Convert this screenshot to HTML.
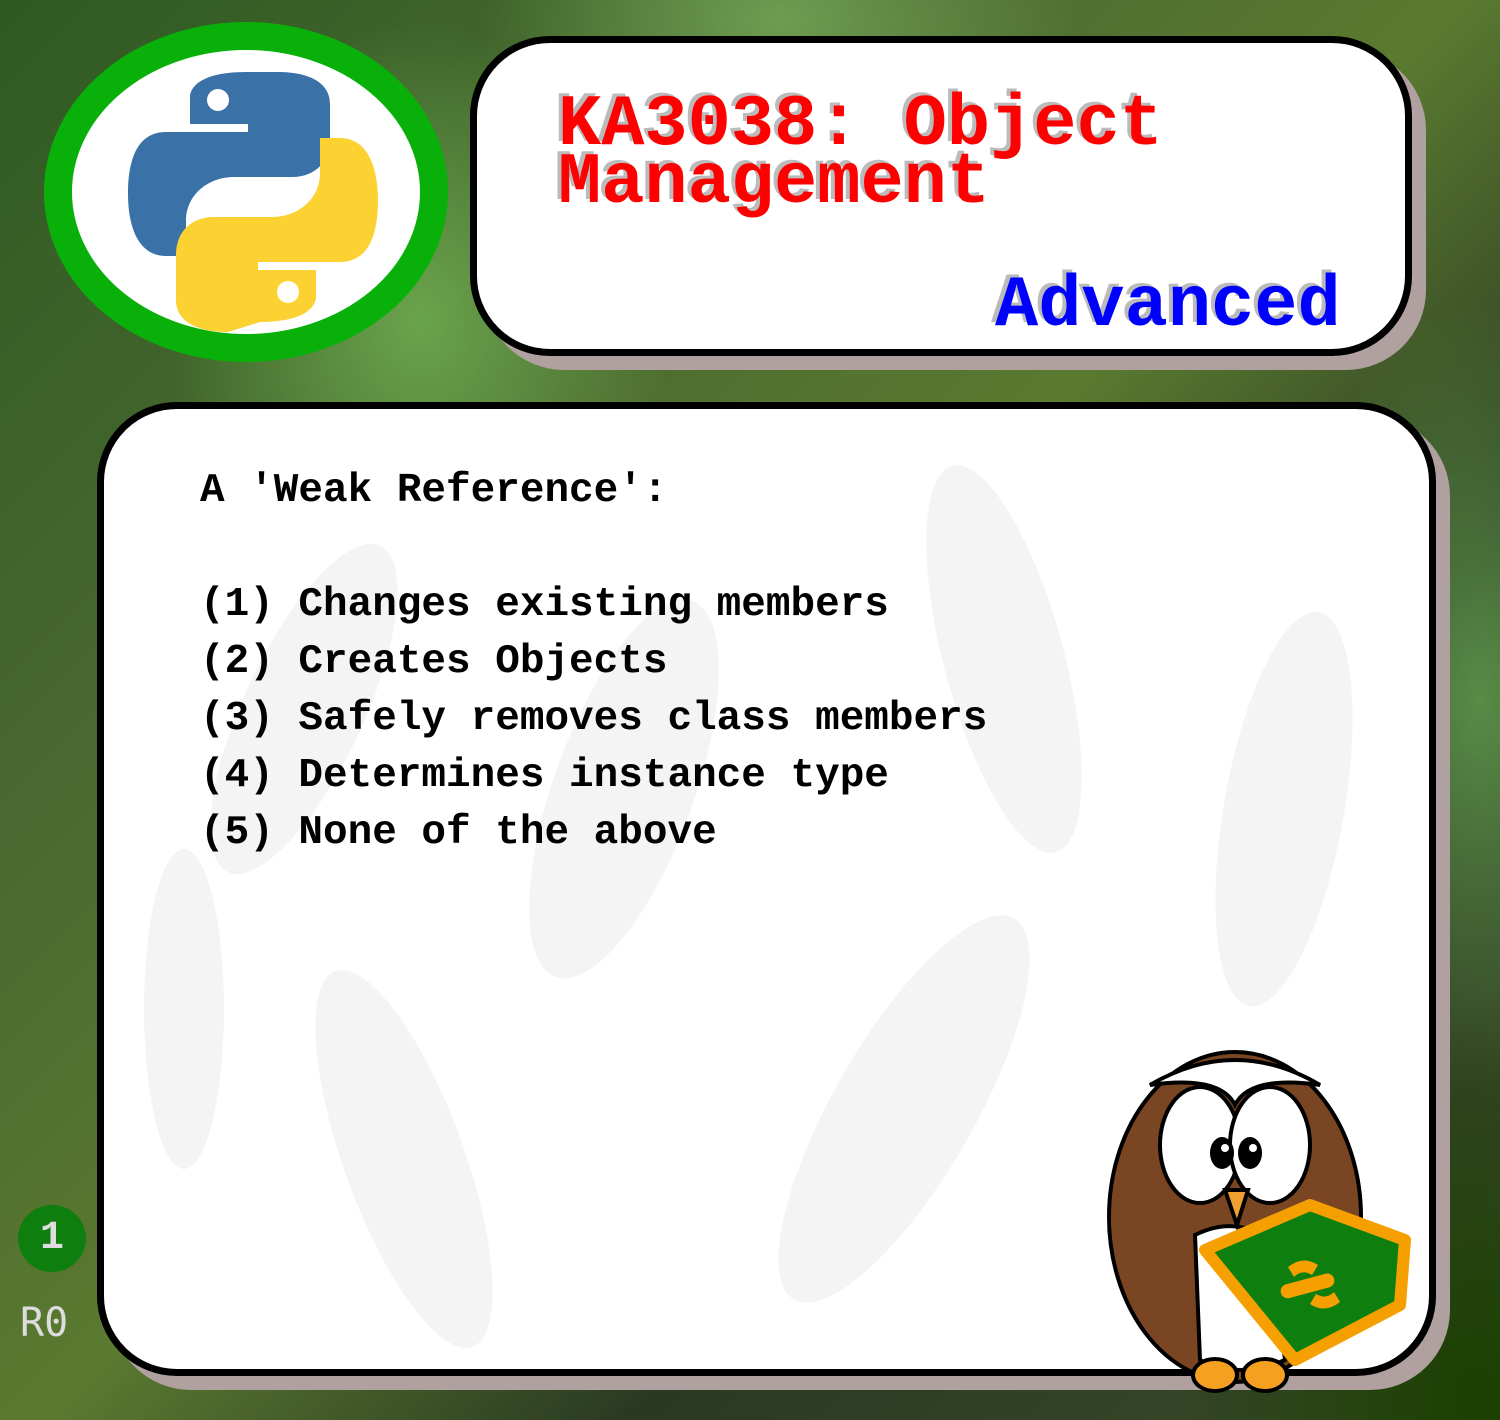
<!DOCTYPE html>
<html><head><meta charset="utf-8"><style>
html,body{margin:0;padding:0}
body{width:1500px;height:1420px;position:relative;overflow:hidden;
background:
radial-gradient(ellipse 300px 200px at 780px 20px, rgba(120,170,90,.8), transparent),
radial-gradient(ellipse 250px 300px at 420px 320px, rgba(110,170,80,.9), transparent),
radial-gradient(ellipse 300px 400px at 1480px 1400px, #1a4000, transparent),
radial-gradient(ellipse 200px 400px at 1480px 700px, rgba(100,160,80,.8), transparent),
linear-gradient(135deg,#2e5a22 0%,#4a6a30 30%,#5a7a30 50%,#2a3a22 70%,#3a4a2a 100%);}
.mono{font-family:"Liberation Mono",monospace;font-weight:bold}
.card{position:absolute;background:#fff;border:7px solid #000;box-shadow:14px 14px 0 #b0a0a0;box-sizing:border-box}
</style></head><body>
<svg style="position:absolute;left:0;top:0" width="1500" height="1420">
<ellipse cx="246" cy="192" rx="188" ry="156" fill="#fff" stroke="#0ab00a" stroke-width="28"/>
<g transform="translate(128,72)">
<path d="M118 0C60 0 62 25 62 25v27h58v8H38C8 60 0 90 0 122c0 32 10 62 38 62h20v-35c0-26 22-44 48-44h58c24 0 38-16 38-38V32C202 10 180 0 150 0Z" fill="#3a72a8"/>
<circle cx="90" cy="28" r="11" fill="#fff"/>
<path d="M132 250c58 0 56-25 56-25v-27h-58v-8h82c30 0 38-30 38-62s-10-62-38-62h-20v35c0 26-22 44-48 44H86c-24 0-38 16-38 38v45c0 22 22 32 52 32Z" fill="#fcd232"/>
<circle cx="160" cy="220" r="11" fill="#fff"/>
</g>
</svg>
<div class="card" style="left:470px;top:36px;width:942px;height:320px;border-radius:80px"></div>
<div class="mono" style="position:absolute;left:558px;top:96px;font-size:72px;line-height:58px;color:#f00;text-shadow:-4px -3px 0 #bbb;white-space:pre">KA3038: Object
Management</div>
<div class="mono" style="position:absolute;left:995px;top:270px;font-size:72px;line-height:72px;color:#00f;text-shadow:-4px -3px 0 #bbb">Advanced</div>
<div class="card" style="left:97px;top:402px;width:1339px;height:974px;border-radius:80px;overflow:hidden">
<svg width="1330" height="970" style="position:absolute;left:0;top:0" fill="#f4f4f4">
<ellipse cx="200" cy="300" rx="60" ry="180" transform="rotate(25 200 300)"/>
<ellipse cx="520" cy="380" rx="70" ry="200" transform="rotate(20 520 380)"/>
<ellipse cx="900" cy="250" rx="60" ry="200" transform="rotate(-15 900 250)"/>
<ellipse cx="1180" cy="400" rx="60" ry="200" transform="rotate(10 1180 400)"/>
<ellipse cx="300" cy="750" rx="60" ry="200" transform="rotate(-20 300 750)"/>
<ellipse cx="800" cy="700" rx="70" ry="220" transform="rotate(30 800 700)"/>
<ellipse cx="80" cy="600" rx="40" ry="160"/>
</svg>
<div class="mono" style="position:absolute;left:96px;top:54px;font-size:41px;line-height:57px;color:#000;white-space:pre">A 'Weak Reference':

(1) Changes existing members
(2) Creates Objects
(3) Safely removes class members
(4) Determines instance type
(5) None of the above</div>
</div>
<div style="position:absolute;left:18px;top:1205px;width:68px;height:67px;border-radius:50%;background:#0e7e0e;color:#ddd;font:bold 40px 'Liberation Mono',monospace;text-align:center;line-height:67px">1</div>
<div style="position:absolute;left:20px;top:1300px;color:#ddd;font:40px 'DejaVu Sans Mono',monospace">R0</div>
<svg style="position:absolute;left:1100px;top:1045px" width="330" height="350" viewBox="0 0 330 350">
<g stroke="#000" stroke-width="4">
<ellipse cx="135" cy="172" rx="126" ry="165" fill="#7a4522"/>
<path d="M50 40 Q135 -10 220 40 Q150 30 135 60 Q120 30 50 40Z" fill="#fff"/>
<ellipse cx="100" cy="100" rx="40" ry="58" fill="#fff"/>
<ellipse cx="170" cy="100" rx="40" ry="58" fill="#fff"/>
<path d="M95 190 Q135 170 170 195 L185 315 Q140 335 100 315Z" fill="#fff"/>
<path d="M125 145 L148 145 L137 180Z" fill="#f0a030"/>
<ellipse cx="115" cy="330" rx="22" ry="16" fill="#f5a020"/>
<ellipse cx="165" cy="330" rx="22" ry="16" fill="#f5a020"/>
</g>
<ellipse cx="122" cy="108" rx="12" ry="16"/><ellipse cx="150" cy="108" rx="12" ry="16"/>
<circle cx="125" cy="103" r="4" fill="#fff"/><circle cx="153" cy="103" r="4" fill="#fff"/>
<path d="M105 205 L210 160 L305 195 L300 260 L195 315Z" fill="#0e7e0e" stroke="#f5a000" stroke-width="12" stroke-linejoin="round"/>
<g fill="#f5a000"><path d="M188 222 q15-12 30-2 l-6 10 q-10-6-18 2Z"/><rect x="180" y="234" width="55" height="14" rx="7" transform="rotate(-15 207 241)"/><path d="M240 257 q-15 12-30 2 l6-10 q10 6 18-2Z"/></g>
</svg>
</body></html>
